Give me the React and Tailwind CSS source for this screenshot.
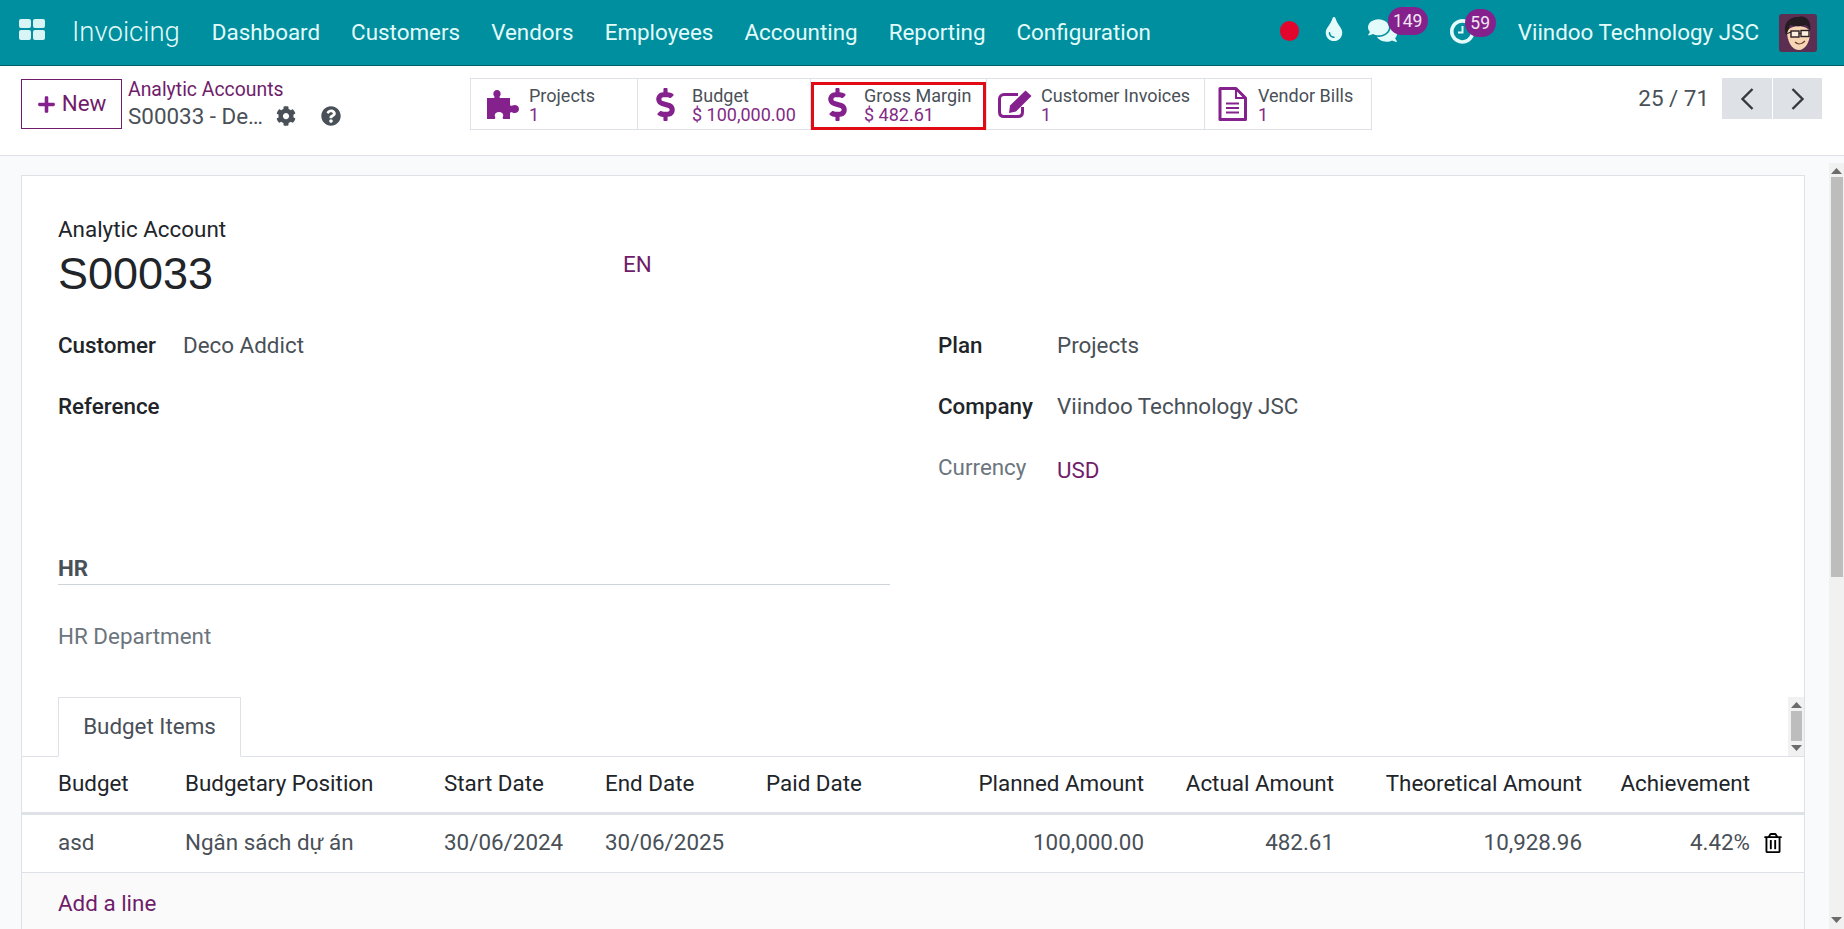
import React from "react";
import { FaDollarSign, FaCog, FaQuestionCircle, FaTint, FaComments, FaRegTrashAlt, FaPlus } from "react-icons/fa";

const NAV = ["Dashboard", "Customers", "Vendors", "Employees", "Accounting", "Reporting", "Configuration"];

function Avatar() {
  return (
    <svg width="38" height="38" viewBox="0 0 38 38" className="rounded-[3px]">
      <rect width="38" height="38" fill="#5c2f52" />
      <path d="M8 19 C8 10 31 10 31 19 C31 28 26 36 20 36 C14 36 9 30 8 19Z" fill="#f5d5b3" />
      <path d="M7 21 C3 9 11 2 20 3 C27 1 33 7 31 17 C30 13 28 11 26 11 C21 13 15 12 11 11 C10 14 9 17 7 21Z" fill="#241c22" />
      <rect x="12" y="17" width="8" height="6" fill="#fdeedd" stroke="#2b2025" strokeWidth="1.4" />
      <rect x="22" y="16.5" width="8" height="6" fill="#fdeedd" stroke="#2b2025" strokeWidth="1.4" />
      <path d="M7 20 L12 18 M20 19.5 H22" stroke="#2b2025" strokeWidth="1.2" />
      <path d="M16 28 C19 31 23 30 26 27" stroke="#6d3d2b" strokeWidth="1.2" fill="none" />
    </svg>
  );
}

function ClockIcon() {
  return (
    <svg width="25" height="25" viewBox="0 0 25 25" fill="none">
      <path d="M17 3 A10.5 10.5 0 1 0 22.7 14" stroke="currentColor" strokeWidth="3.6" />
      <path d="M12.5 7 V13.5 H8" stroke="currentColor" strokeWidth="2" />
    </svg>
  );
}

function PuzzleIcon() {
  return (
    <svg width="32" height="29" viewBox="0 0 32 29" fill="currentColor">
      <path d="M0 8 H6.5 C7.5 8 8 7 7 6 C5.5 4 6.5 0 10 0 C13.5 0 14.5 4 13 6 C12 7 12.5 8 13.5 8 H23 V14.5 C23 16 24.5 16 25.5 15.5 C28 14 32 15.5 32 19 C32 22.5 28 24 25.5 22.5 C24.5 22 23 22 23 23.5 V29 H17 C15.5 29 15.5 27.5 16 26.5 C17 24 15 22 12 22 C9 22 7 24 8 26.5 C8.5 27.5 8.5 29 7 29 H0 Z" />
    </svg>
  );
}

function EditIcon() {
  return (
    <svg width="34" height="28" viewBox="0 0 34 28" fill="none">
      <path d="M24.5 17 V22 C24.5 25 22.5 26.5 20 26.5 H6 C3.5 26.5 1.5 25 1.5 22 V9 C1.5 6.5 3.5 4.5 6 4.5 H20" stroke="currentColor" strokeWidth="3" />
      <path d="M27.5 0.5 L33.5 6 L18 21.5 L11 23 L12 15.5 Z" fill="currentColor" />
    </svg>
  );
}

function FileIcon() {
  return (
    <svg width="29" height="34" viewBox="0 0 29 34" fill="none" stroke="currentColor">
      <path d="M2 1.5 H18 L27.5 11 V32.5 H2 Z" strokeWidth="3" strokeLinejoin="round" />
      <path d="M18 2 V11 H27" strokeWidth="2" />
      <path d="M8 16.5 H21 M8 21 H21 M8 25.5 H21" strokeWidth="2" />
    </svg>
  );
}

function Stat({ icon, label, value, w, highlight, iconBox }) {
  return (
    <div className={`relative flex items-center h-full border-r border-[#dee2e6] last:border-r-0 ${w}`}>
      <div className={`flex shrink-0 text-[#84218c] ${iconBox}`}>{icon}</div>
      <div className="flex flex-col leading-[19px] text-[18px] whitespace-nowrap pt-[2px]">
        <span className="text-[#495057]">{label}</span>
        <span className="text-[#832a86]">{value}</span>
      </div>
      {highlight && <div className="absolute left-0 top-[3px] bottom-[-1px] right-0 border-[3px] border-[#e00b14]" />}
    </div>
  );
}

function Row({ children, className }) {
  return (
    <div className={`grid grid-cols-[36px_127px_259px_161px_161px_195px_183px_190px_248px_168px_1fr] items-center ${className}`}>
      {children}
    </div>
  );
}

function ScrollArrow({ up, className }) {
  return (
    <svg width="11" height="6" viewBox="0 0 11 6" className={className}>
      <path d={up ? "M5.5 0 L11 6 H0Z" : "M0 0 H11 L5.5 6Z"} fill="#6b6b6b" />
    </svg>
  );
}

function Angle({ left }) {
  return (
    <svg width="16" height="24" viewBox="0 0 16 24" fill="none" stroke="#343a40" strokeWidth="2.4">
      <path d={left ? "M13.5 2 L3.5 12 L13.5 22" : "M2.5 2 L12.5 12 L2.5 22"} />
    </svg>
  );
}

export default function App() {
  return (
    <div className="w-[1844px] h-[929px] overflow-hidden flex flex-col bg-[#f9fafb] text-[22.4px] text-[#212529] font-['Roboto',sans-serif]">
      {/* NAV */}
      <header className="h-[66px] shrink-0 flex items-center bg-[#008f9e] border-b border-[#00616c] text-[#e3fbfb] pl-[19px] pr-[27px]">
        <div className="grid grid-cols-2 gap-[2px] w-[26px] h-[21px] mr-[27px] -mt-[7px]">
          <span className="bg-[#d9f4f4] rounded-[2px]" />
          <span className="bg-[#d9f4f4] rounded-[2px]" />
          <span className="bg-[#d9f4f4] rounded-[2px]" />
          <span className="bg-[#d9f4f4] rounded-[2px]" />
        </div>
        <span className="text-[27.5px] font-light mr-[32px] -mt-[2px]">Invoicing</span>
        <nav className="flex gap-[31px]">
          {NAV.map((n) => (
            <span key={n}>{n}</span>
          ))}
        </nav>
        <div className="ml-auto flex items-center">
          <span className="w-[19px] h-[20px] rounded-full bg-[#e3062c] mr-[23px] -mt-[3px]" />
          <FaTint className="text-[#e3fbfb] mr-[22px] -mt-[7px]" size={24} />
          <div className="relative mr-[53px] w-[29px] h-[29px] -mt-[4px] flex items-center">
            <FaComments size={29} className="text-[#e3fbfb]" />
            <span className="absolute -top-[9px] left-[20px] w-[40px] h-[28px] rounded-full bg-[#84218c] text-[#f3e6f3] text-[17.5px] flex items-center justify-center">149</span>
          </div>
          <div className="relative mr-[43px] w-[25px] h-[25px] -mt-[2px] text-[#e3fbfb]">
            <ClockIcon />
            <span className="absolute -top-[10px] left-[15px] w-[31px] h-[28px] rounded-full bg-[#84218c] text-[#f3e6f3] text-[17.5px] flex items-center justify-center">59</span>
          </div>
          <span className="mr-[20px] whitespace-nowrap">Viindoo Technology JSC</span>
          <Avatar />
        </div>
      </header>

      {/* CONTROL PANEL */}
      <div className="h-[90px] shrink-0 bg-white border-b border-[#dee2e6] flex items-start pt-[12px] pl-[21px] pr-[22px]">
        <button className="mt-[1px] w-[101px] h-[50px] border border-[#6f1d6b] text-[#6f1d6b] flex items-center justify-center gap-[6px]">
          <FaPlus size={19} className="text-[#84218c]" />
          <span>New</span>
        </button>
        <div className="ml-[6px] w-[342px] flex flex-col -mt-[2px]">
          <span className="text-[#6f1d6b] text-[19.4px] leading-[27px]">Analytic Accounts</span>
          <div className="flex items-center text-[#495057] leading-[26px]">
            <span className="w-[148px] whitespace-nowrap">S00033 - De…</span>
            <FaCog size={20} className="mr-[25px]" />
            <FaQuestionCircle size={20} />
          </div>
        </div>
        <div className="flex items-center h-[52px] w-[902px] border border-[#dee2e6]">
          <Stat w="w-[167px]" iconBox="w-[58px] pl-[16px]" icon={<PuzzleIcon />} label="Projects" value="1" />
          <Stat w="w-[173px]" iconBox="w-[54px] pl-[11px]" icon={<FaDollarSign size={33} />} label="Budget" value="$ 100,000.00" />
          <Stat w="w-[176px]" iconBox="w-[53px] pl-[10px]" highlight icon={<FaDollarSign size={33} />} label="Gross Margin" value="$ 482.61" />
          <Stat w="w-[218px]" iconBox="w-[54px] pl-[11px]" icon={<EditIcon />} label="Customer Invoices" value="1" />
          <Stat w="w-[166px]" iconBox="w-[53px] pl-[13px]" icon={<FileIcon />} label="Vendor Bills" value="1" />
        </div>
        <div className="ml-auto flex items-center h-[41px]">
          <span className="text-[#495057] mr-[13px]">25 / 71</span>
          <div className="flex gap-[1px]">
            <div className="w-[50px] h-[41px] bg-[#dee2e6] flex items-center justify-center"><Angle left /></div>
            <div className="w-[49px] h-[41px] bg-[#dee2e6] flex items-center justify-center"><Angle /></div>
          </div>
        </div>
      </div>

      {/* CONTENT */}
      <div className="flex-1 flex min-h-0">
        <div className="flex-1 pl-[21px] pr-[24px] pt-[19px] min-w-0">
          <div className="h-[900px] bg-white border border-[#dee2e6]">
            <div className="pl-[36px] pt-[39px]">
              <div className="leading-[28px]">Analytic Account</div>
              <div className="flex items-start mt-[3px]">
                <span className="text-[45px] leading-[56px] font-['Liberation_Sans',sans-serif] w-[565px]">S00033</span>
                <span className="text-[#6f1d6b] mt-[2px]">EN</span>
              </div>

              <div className="grid grid-cols-[880px_1fr] mt-[27px]">
                <div className="flex flex-col">
                  <div className="flex h-[61px] items-start">
                    <span className="w-[125px] font-medium">Customer</span>
                    <span className="text-[#495057]">Deco Addict</span>
                  </div>
                  <div className="flex h-[61px] items-start font-medium">Reference</div>
                </div>
                <div className="flex flex-col">
                  <div className="flex h-[61px] items-start">
                    <span className="w-[119px] font-medium">Plan</span>
                    <span className="text-[#495057]">Projects</span>
                  </div>
                  <div className="flex h-[61px] items-start">
                    <span className="w-[119px] font-medium">Company</span>
                    <span className="text-[#495057]">Viindoo Technology JSC</span>
                  </div>
                  <div className="flex items-start">
                    <span className="w-[119px] text-[#6c757d]">Currency</span>
                    <span className="text-[#6f1d6b] mt-[3px]">USD</span>
                  </div>
                </div>
              </div>

              <div className="w-[832px] mt-[66px] pb-[2px] border-b border-[#ced4da] font-bold text-[#495057] leading-[28px]">HR</div>
              <div className="mt-[37px] text-[#6c757d] leading-[28px]">HR Department</div>
            </div>

            {/* TABS */}
            <div className="relative mt-[47px] h-[60px] border-b border-[#dee2e6] pl-[36px]">
              <div className="w-[183px] h-[60px] border border-b-white border-[#dee2e6] bg-white flex items-center justify-center text-[#495057]">Budget Items</div>
              <div className="absolute right-0 top-0 w-[16px] h-[59px] bg-[#f1f1f1] flex flex-col items-center justify-between py-[5px]">
                <ScrollArrow up />
                <div className="w-[11px] h-[30px] bg-[#bdbdbd]" />
                <ScrollArrow />
              </div>
            </div>

            {/* TABLE */}
            <Row className="h-[58px] border-b-[3px] border-[#dee2e6]">
              <span />
              <span>Budget</span>
              <span>Budgetary Position</span>
              <span>Start Date</span>
              <span>End Date</span>
              <span>Paid Date</span>
              <span className="text-right">Planned Amount</span>
              <span className="text-right">Actual Amount</span>
              <span className="text-right">Theoretical Amount</span>
              <span className="text-right">Achievement</span>
              <span />
            </Row>
            <Row className="h-[58px] border-b border-[#dee2e6] text-[#495057]">
              <span />
              <span>asd</span>
              <span>Ngân sách dự án</span>
              <span>30/06/2024</span>
              <span>30/06/2025</span>
              <span />
              <span className="text-right">100,000.00</span>
              <span className="text-right">482.61</span>
              <span className="text-right">10,928.96</span>
              <span className="text-right">4.42%</span>
              <span className="flex justify-center text-black pr-[8px]"><FaRegTrashAlt size={20} /></span>
            </Row>
            <div className="h-[200px] bg-[#fafafa] pl-[36px] pt-[16px] text-[#6f1d6b] leading-[28px]">Add a line</div>
          </div>
        </div>
        {/* PAGE SCROLLBAR */}
        <div className="w-[15px] mt-[7px] bg-[#f1f1f1] flex flex-col items-center pt-[5px] pb-[6px]">
          <ScrollArrow up />
          <div className="w-[12px] h-[400px] mt-[3px] bg-[#bdbdbd]" />
          <ScrollArrow className="mt-auto" />
        </div>
      </div>
    </div>
  );
}
